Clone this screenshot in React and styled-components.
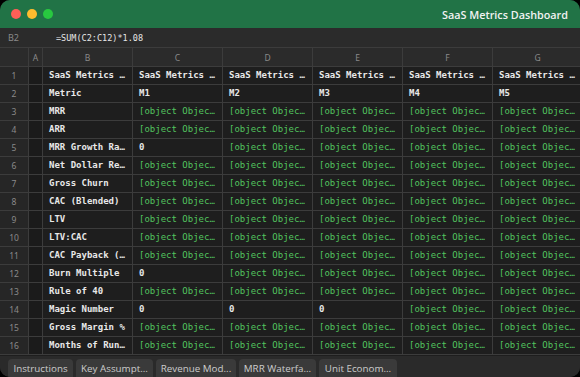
import React from "react";
import styled, { createGlobalStyle } from "styled-components";

const Global = createGlobalStyle`
  html, body { margin: 0; padding: 0; background: #000; }
  body { width: 580px; height: 377px; overflow: hidden; }
`;

const Window = styled.div`
  width: 580px;
  height: 377px;
  border-radius: 10px;
  overflow: hidden;
  background: #2a2a2a;
  display: flex;
  flex-direction: column;
`;

const TitleBar = styled.div`
  height: 28px;
  background: #217346;
  display: flex;
  align-items: center;
  padding: 0 12px 0 11px;
  flex-shrink: 0;
`;

const Lights = styled.div`
  display: flex;
  gap: 6px;
`;

const Light = styled.span`
  width: 10px;
  height: 10px;
  border-radius: 50%;
  background: ${(p) => p.$c};
`;

const Title = styled.div`
  margin-left: auto;
  color: #f2f2f2;
  font-family: "Open Sans", "Noto Sans", sans-serif;
  font-size: 10.8px;
  font-weight: 600;
`;

const FormulaBar = styled.div`
  height: 19px;
  background: #2b2b2b;
  display: flex;
  align-items: center;
  flex-shrink: 0;
`;

const CellRef = styled.div`
  width: 56px;
  padding-left: 8px;
  box-sizing: border-box;
  color: #8a8a8a;
  font-family: "Noto Sans", sans-serif;
  font-size: 9px;
`;

const Formula = styled.div`
  color: #e6e6e6;
  font-family: "DejaVu Sans Mono", monospace;
  font-size: 8.5px;
`;

const Grid = styled.div`
  flex: 0 0 308px;
  display: grid;
  grid-template-columns: 29px 14px repeat(6, 90px);
  grid-template-rows: 19px;
  grid-auto-rows: 18px;
  background: #1e1e1e;
  overflow: hidden;
  align-content: start;
  border-top: 1px solid #3c3c3c;
`;

const ColHead = styled.div`
  background: #2b2b2b;
  border-right: 1px solid #3c3c3c;
  border-bottom: 1px solid #3c3c3c;
  box-sizing: border-box;
  color: #8a8a8a;
  font-family: "Noto Sans", sans-serif;
  font-size: 8.5px;
  display: flex;
  align-items: center;
  justify-content: center;
`;

const RowHead = styled.div`
  background: #262626;
  border-right: 1px solid #3c3c3c;
  border-bottom: 1px solid #3c3c3c;
  box-sizing: border-box;
  color: #8a8a8a;
  font-family: "Noto Sans", sans-serif;
  font-size: 8.5px;
  display: flex;
  align-items: center;
  justify-content: center;
`;

const Cell = styled.div`
  background: ${(p) => (p.$narrow ? "#1b1b1b" : "#1e1e1e")};
  border-right: 1px solid #3c3c3c;
  border-bottom: 1px solid #3c3c3c;
  box-sizing: border-box;
  padding: 0 6px;
  font-family: "DejaVu Sans Mono", monospace;
  font-size: 9px;
  line-height: 17px;
  font-weight: ${(p) => (p.$bold ? 700 : 400)};
  color: ${(p) => (p.$green ? "#52c45e" : "#e8e8e8")};
  white-space: nowrap;
  overflow: hidden;
  text-overflow: ellipsis;
`;

const TabBar = styled.div`
  flex: 1;
  background: #2a2a2a;
  display: flex;
  align-items: flex-end;
  gap: 3px;
  padding: 0 8px;
`;

const Tab = styled.div`
  height: 18px;
  width: ${(p) => p.$w}px;
  box-sizing: border-box;
  background: #3a3a3a;
  border-radius: 4px 4px 0 0;
  color: #cccccc;
  font-family: "Open Sans", "Noto Sans", sans-serif;
  font-size: 9.8px;
  display: flex;
  align-items: center;
  justify-content: center;
  white-space: nowrap;
`;

const cols = ["A", "B", "C", "D", "E", "F", "G"];
const OBJ = "[object Object]";

const metrics = [
  "MRR",
  "ARR",
  "MRR Growth Rate",
  "Net Dollar Retention",
  "Gross Churn",
  "CAC (Blended)",
  "LTV",
  "LTV:CAC",
  "CAC Payback (Months)",
  "Burn Multiple",
  "Rule of 40",
  "Magic Number",
  "Gross Margin %",
  "Months of Runway",
];

const values = {
  "MRR Growth Rate": ["0", "o", "o", "o", "o"],
  "Burn Multiple": ["0", "o", "o", "o", "o"],
  "Magic Number": ["0", "0", "0", "o", "o"],
};

const tabs = [
  ["Instructions", 65],
  ["Key Assumpt...", 77],
  ["Revenue Mod...", 80],
  ["MRR Waterfa...", 77],
  ["Unit Econom...", 78],
];

export default function App() {
  const rows = [];
  rows.push({ b: "SaaS Metrics Dashboard", vals: Array(5).fill("SaaS Metrics Dashboard"), head: true });
  rows.push({ b: "Metric", vals: ["M1", "M2", "M3", "M4", "M5"], head: true });
  metrics.forEach((m) => {
    const v = values[m] || ["o", "o", "o", "o", "o"];
    rows.push({ b: m, vals: v });
  });

  return (
    <>
      <Global />
      <Window>
        <TitleBar>
          <Lights>
            <Light $c="#ff5f57" />
            <Light $c="#febc2e" />
            <Light $c="#28c840" />
          </Lights>
          <Title>SaaS Metrics Dashboard</Title>
        </TitleBar>
        <FormulaBar>
          <CellRef>B2</CellRef>
          <Formula>=SUM(C2:C12)*1.08</Formula>
        </FormulaBar>
        <Grid>
          <ColHead />
          {cols.map((c) => (
            <ColHead key={c}>{c}</ColHead>
          ))}
          {rows.map((r, i) => (
            <React.Fragment key={i}>
              <RowHead>{i + 1}</RowHead>
              <Cell $narrow />
              <Cell $bold>{r.b}</Cell>
              {r.vals.map((v, j) =>
                !r.head && v === "o" ? (
                  <Cell key={j} $green>{OBJ}</Cell>
                ) : (
                  <Cell key={j} $bold>{v}</Cell>
                )
              )}
            </React.Fragment>
          ))}
        </Grid>
        <TabBar>
          {tabs.map(([t, w]) => (
            <Tab key={t} $w={w}>{t}</Tab>
          ))}
        </TabBar>
      </Window>
    </>
  );
}
